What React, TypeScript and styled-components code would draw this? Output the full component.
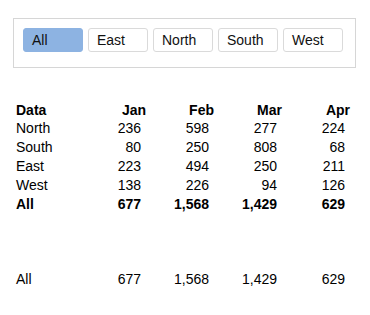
import * as React from 'react';
import styled, { createGlobalStyle } from 'styled-components';

const REGIONS = ['All', 'East', 'North', 'South', 'West'];
const MONTHS = ['Jan', 'Feb', 'Mar', 'Apr'];

const ROWS: { name: string; values: number[] }[] = [
  { name: 'North', values: [236, 598, 277, 224] },
  { name: 'South', values: [80, 250, 808, 68] },
  { name: 'East', values: [223, 494, 250, 211] },
  { name: 'West', values: [138, 226, 94, 126] },
];

const TOTALS = MONTHS.map((_, i) => ROWS.reduce((sum, r) => sum + r.values[i], 0));

const fmt = (n: number) => n.toLocaleString('en-US');

export default function App() {
  const [active, setActive] = React.useState('All');

  return (
    <Page>
      <GlobalStyle />
      <FilterPanel>
        {REGIONS.map((r) => (
          <FilterButton key={r} $active={r === active} onClick={() => setActive(r)}>
            {r}
          </FilterButton>
        ))}
      </FilterPanel>

      <Table>
        <HeaderCell $left>Data</HeaderCell>
        {MONTHS.map((m) => (
          <HeaderCell key={m}>{m}</HeaderCell>
        ))}
        {ROWS.map((row) => (
          <React.Fragment key={row.name}>
            <NameCell>{row.name}</NameCell>
            {row.values.map((v, i) => (
              <NumCell key={i}>{fmt(v)}</NumCell>
            ))}
          </React.Fragment>
        ))}
        <NameCell $bold>All</NameCell>
        {TOTALS.map((v, i) => (
          <NumCell key={i} $bold>
            {fmt(v)}
          </NumCell>
        ))}
      </Table>

      <SummaryRow>
        <NameCell>All</NameCell>
        {TOTALS.map((v, i) => (
          <NumCell key={i}>{fmt(v)}</NumCell>
        ))}
      </SummaryRow>
    </Page>
  );
}

const GlobalStyle = createGlobalStyle`
  body {
    margin: 0;
    background: #fff;
    font-family: "Liberation Sans", Arial, sans-serif;
    color: #000;
  }
`;

const Page = styled.div`
  width: 370px;
  height: 315px;
  padding: 18px 0 0 13px;
  box-sizing: border-box;
`;

const FilterPanel = styled.div`
  width: 343px;
  height: 50px;
  box-sizing: border-box;
  border: 1px solid #d6d6d6;
  padding: 9px 9px 0 9px;
  display: flex;
  gap: 5px;
`;

const FilterButton = styled.div<{ $active?: boolean }>`
  width: 60px;
  height: 24px;
  box-sizing: border-box;
  border: 1px solid ${(p) => (p.$active ? '#8db3e2' : '#dadada')};
  border-radius: 3px;
  background: ${(p) => (p.$active ? '#8db3e2' : '#fff')};
  padding-left: 8px;
  font-size: 14px;
  line-height: 22px;
  color: #111;
  cursor: pointer;
`;

const Table = styled.div`
  margin: 33px 0 0 3px;
  display: grid;
  grid-template-columns: 62px repeat(4, 68px);
  grid-template-rows: 18px repeat(5, 19px);
  font-size: 14px;
  line-height: 19px;
`;

const SummaryRow = styled.div`
  margin: 56px 0 0 3px;
  display: grid;
  grid-template-columns: 62px repeat(4, 68px);
  grid-template-rows: 19px;
  font-size: 14px;
  line-height: 19px;
`;

const HeaderCell = styled.div<{ $left?: boolean }>`
  font-weight: bold;
  text-align: ${(p) => (p.$left ? 'left' : 'right')};
  line-height: 18px;
`;

const NameCell = styled.div<{ $bold?: boolean }>`
  font-weight: ${(p) => (p.$bold ? 'bold' : 'normal')};
`;

const NumCell = styled.div<{ $bold?: boolean }>`
  text-align: right;
  padding-right: 5px;
  font-weight: ${(p) => (p.$bold ? 'bold' : 'normal')};
`;
